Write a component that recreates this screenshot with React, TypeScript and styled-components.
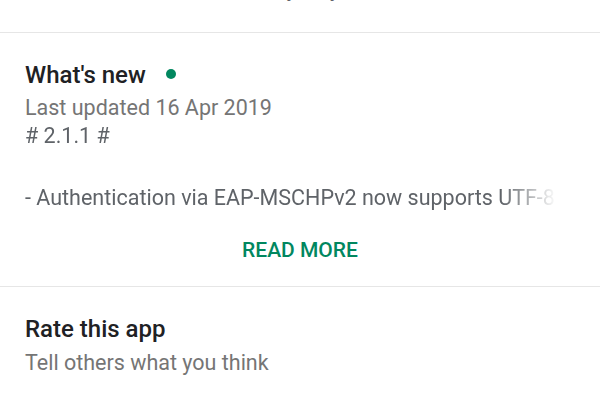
import React from 'react';
import styled, { createGlobalStyle } from 'styled-components';

const GlobalStyle = createGlobalStyle`
  html, body {
    margin: 0;
    padding: 0;
    background: #ffffff;
    font-family: Roboto, "Noto Sans", Arial, sans-serif;
    -webkit-font-smoothing: antialiased;
  }
`;

const notes = ['# 2.1.1 #', '', '- Authentication via EAP-MSCHPv2 now supports UTF-8 passwords'];

export default function App() {
  return (
    <Page>
      <GlobalStyle />
      <TopSection>
        <Peek>Connect in an easy way.</Peek>
      </TopSection>
      <Section>
        <TitleRow>
          <Title>What's new</Title>
          <Dot />
        </TitleRow>
        <Updated>Last updated 16 Apr 2019</Updated>
        <Notes>
          {notes.map((line, i) => (
            <NoteLine key={i}>{line || '\u00a0'}</NoteLine>
          ))}
        </Notes>
        <ReadMore>READ MORE</ReadMore>
      </Section>
      <Section>
        <Title>Rate this app</Title>
        <Subtitle>Tell others what you think</Subtitle>
      </Section>
    </Page>
  );
}

const Page = styled.div`
  width: 600px;
  height: 420px;
  overflow: hidden;
  background: #fff;
`;

const TopSection = styled.div`
  height: 32px;
  border-bottom: 1px solid #e6e6e6;
  overflow: hidden;
`;

const Peek = styled.div`
  margin-top: -24px;
  padding-left: 116px;
  white-space: nowrap;
  font-size: 21.5px;
  line-height: 26px;
  color: #5f6368;
`;

const Section = styled.section`
  padding: 26px 25px 0;
  border-bottom: 1px solid #e6e6e6;

  &:last-child {
    border-bottom: none;
  }
`;

const TitleRow = styled.div`
  display: flex;
  align-items: center;
  gap: 20px;
`;

const Title = styled.h2`
  margin: 0;
  font-size: 24px;
  font-weight: 500;
  line-height: 32px;
  color: #202124;
`;

const Dot = styled.span`
  width: 10px;
  height: 10px;
  border-radius: 50%;
  background: #01875f;
  margin-top: -3px;
`;

const Updated = styled.div`
  margin-top: 3px;
  font-size: 21.5px;
  line-height: 28px;
  color: #757575;
`;

const Notes = styled.div`
  margin-top: -2px;
  font-size: 21.5px;
  line-height: 31px;
  color: #5f6368;
  white-space: nowrap;
  overflow: hidden;
  -webkit-mask-image: linear-gradient(to right, #000 0, #000 476px, transparent 532px);
  mask-image: linear-gradient(to right, #000 0, #000 476px, transparent 532px);
`;

const NoteLine = styled.div``;

const ReadMore = styled.div`
  text-align: center;
  padding: 25px 0 24px;
  font-size: 21px;
  font-weight: 500;
  line-height: 24px;
  color: #01875f;
`;

const Subtitle = styled.div`
  margin-top: 3px;
  font-size: 21.5px;
  line-height: 30px;
  color: #757575;
`;
